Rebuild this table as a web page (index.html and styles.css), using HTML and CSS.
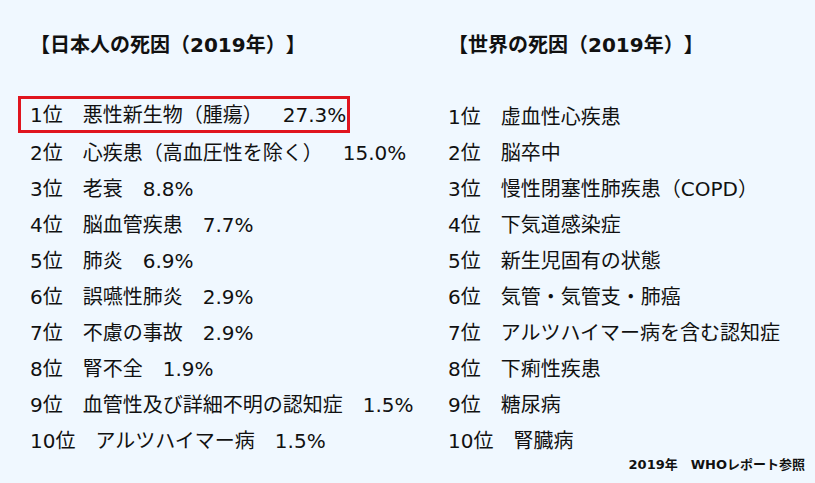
FILE: index.html
```html
<!DOCTYPE html>
<html lang="ja">
<head>
<meta charset="utf-8">
<title>死因ランキング</title>
<link rel="stylesheet" href="styles.css">
</head>
<body>
<div class="page">
  <div class="columns">
    <section class="col col-left">
      <h2 class="heading">【日本人の死因（2019年）】</h2>
      <div class="list">
        <div class="row row-mark">1位　悪性新生物（腫瘍）　27.3%</div>
        <div class="row">2位　心疾患（高血圧性を除く）　15.0%</div>
        <div class="row">3位　老衰　8.8%</div>
        <div class="row">4位　脳血管疾患　7.7%</div>
        <div class="row">5位　肺炎　6.9%</div>
        <div class="row">6位　誤嚥性肺炎　2.9%</div>
        <div class="row">7位　不慮の事故　2.9%</div>
        <div class="row">8位　腎不全　1.9%</div>
        <div class="row">9位　血管性及び詳細不明の認知症　1.5%</div>
        <div class="row">10位　アルツハイマー病　1.5%</div>
      </div>
    </section>
    <section class="col col-right">
      <h2 class="heading">【世界の死因（2019年）】</h2>
      <div class="list">
        <div class="row">1位　虚血性心疾患</div>
        <div class="row">2位　脳卒中</div>
        <div class="row">3位　慢性閉塞性肺疾患（COPD）</div>
        <div class="row">4位　下気道感染症</div>
        <div class="row">5位　新生児固有の状態</div>
        <div class="row">6位　気管・気管支・肺癌</div>
        <div class="row">7位　アルツハイマー病を含む認知症</div>
        <div class="row">8位　下痢性疾患</div>
        <div class="row">9位　糖尿病</div>
        <div class="row">10位　腎臓病</div>
      </div>
    </section>
  </div>
  <div class="note">2019年　WHOレポート参照</div>
</div>
</body>
</html>
```
FILE: styles.css
```css
html, body {
  margin: 0;
  padding: 0;
  background: #f0f8ff;
}
body {
  font-family: "DejaVu Sans", "Noto Sans CJK JP", sans-serif;
  color: #111;
  width: 815px;
  height: 483px;
  overflow: hidden;
  text-spacing-trim: space-all;
}
.page {
  padding-top: 27px;
}
.columns {
  display: flex;
  padding-left: 30px;
}
.col-left {
  width: 418px;
}
.col-right {
  flex: 1;
}
.heading {
  margin: 0 0 36px;
  font-size: 20px;
  font-weight: bold;
  line-height: 36px;
}
.list {
  font-size: 20px;
}
.row {
  line-height: 36px;
  height: 36px;
  white-space: nowrap;
}
.row-mark {
  width: fit-content;
  height: auto;
  border: 3px solid #e0151f;
  margin: -3px 0 2px -12px;
  padding: 1px 1px 0 9px;
  line-height: 30px;
}
.note {
  margin-top: -3px;
  padding-right: 10px;
  text-align: right;
  font-size: 13px;
  font-weight: bold;
  line-height: 18px;
}
```
